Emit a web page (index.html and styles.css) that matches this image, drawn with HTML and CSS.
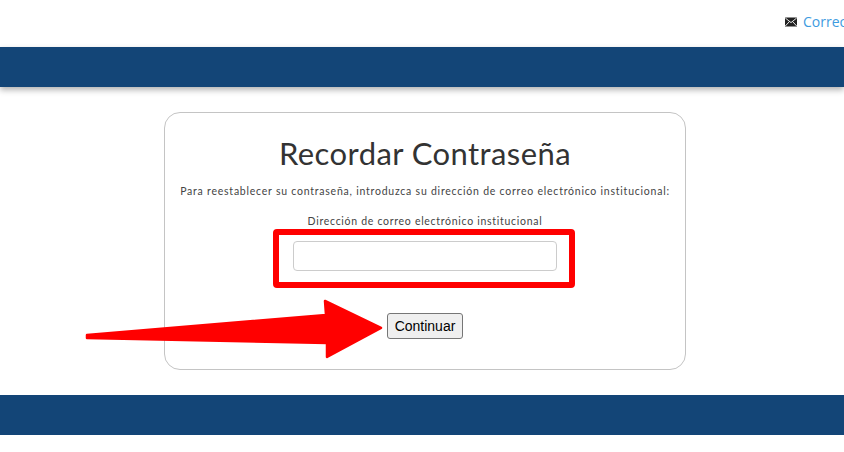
FILE: index.html
```html
<!DOCTYPE html>
<html lang="es">
<head>
<meta charset="utf-8">
<title>Recordar Contraseña</title>
<link rel="stylesheet" href="styles.css">
</head>
<body>
<header class="topbar">
  <a class="mail" href="#">
    <svg class="mail-icon" width="12" height="10" viewBox="0 0 12 10"><path d="M0 .5h12v9H0z" fill="#222"/><path d="M.3 1 6 5.6 11.7 1M.3 9 4.4 4.6M11.7 9 7.6 4.6" fill="none" stroke="#fff" stroke-width=".9"/></svg>
    <span>Correo</span>
  </a>
</header>
<div class="band band-top"></div>
<main class="card">
  <h1>Recordar Contraseña</h1>
  <p class="intro">Para reestablecer su contraseña, introduzca su dirección de correo electrónico institucional:</p>
  <label class="field-label" for="email">Dirección de correo electrónico institucional</label>
  <input class="field" id="email" type="text">
  <button class="submit" type="button">Continuar</button>
</main>
<div class="band band-bottom"></div>
<div class="highlight"></div>
<svg class="arrow" width="844" height="452" viewBox="0 0 844 452"><path d="M87 335 326 315 325 301 381 328 327 357 327 343 87 338Z" fill="#f00" stroke="#f00" stroke-width="2.5" stroke-linejoin="round"/></svg>
</body>
</html>
```
FILE: styles.css
```css
html, body {
  margin: 0;
  padding: 0;
  width: 844px;
  height: 452px;
  overflow: hidden;
  background: #fff;
}
body {
  position: relative;
  font-family: "Lato", "Liberation Sans", sans-serif;
  color: #333;
}
.topbar {
  height: 47px;
  display: flex;
  align-items: flex-start;
  padding-left: 785px;
  box-sizing: border-box;
  width: 900px;
}
.mail {
  display: flex;
  align-items: center;
  gap: 6px;
  margin-top: 14px;
  color: #3d9be0;
  font: 14px/16px "Open Sans", sans-serif;
  text-decoration: none;
  white-space: nowrap;
}
.mail-icon { flex: none; }
.band {
  height: 40px;
  background: #134577;
}
.band-top { box-shadow: 0 3px 6px rgba(0, 0, 0, .3); }
.card {
  box-sizing: border-box;
  width: 522px;
  height: 258px;
  margin: 25px 0 25px 164px;
  border: 1px solid #c4c4c4;
  border-radius: 16px;
  display: flex;
  flex-direction: column;
  align-items: center;
}
h1 {
  margin: 20px 0 0;
  font-size: 31px;
  line-height: 40px;
  font-weight: 400;
  letter-spacing: .42px;
  color: #333;
}
.intro {
  margin: 11px 0 0;
  font-size: 10.5px;
  font-weight: 400;
  line-height: 14px;
  letter-spacing: .77px;
  color: #444;
  white-space: nowrap;
}
.field-label {
  margin-top: 16px;
  font-size: 10.5px;
  font-weight: 400;
  line-height: 14px;
  letter-spacing: .71px;
  color: #444;
}
.field {
  box-sizing: border-box;
  width: 264px;
  height: 30px;
  margin-top: 13px;
  border: 1px solid #ccc;
  border-radius: 4px;
  background: #fff;
}
.submit {
  box-sizing: border-box;
  width: 76px;
  height: 26px;
  margin-top: 42px;
  padding: 0;
  border: 1px solid #767676;
  border-radius: 3px;
  background: #efefef;
  color: #000;
  font: 14px "Liberation Sans", sans-serif;
}
.highlight {
  position: absolute;
  left: 273px;
  top: 229px;
  width: 302px;
  height: 59px;
  box-sizing: border-box;
  border: 6px solid #f00;
  border-radius: 4px;
}
.arrow {
  position: absolute;
  left: 0;
  top: 0;
}
```
